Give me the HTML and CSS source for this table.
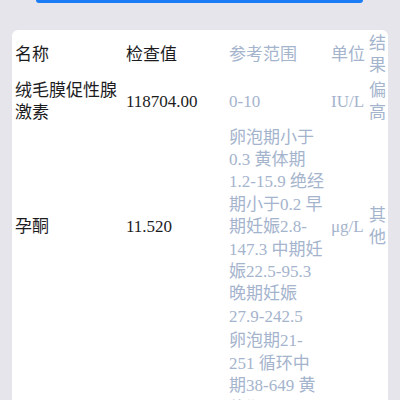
FILE: index.html
```html
<!DOCTYPE html>
<html lang="zh-CN">

<head>
    <meta charset="UTF-8">
    <title>检查报告</title>
    <link rel="stylesheet" href="styles.css">
</head>

<body>

    <div class="top-bar">
        <button class="primary-btn"></button>
    </div>

    <div class="report-card">
        <table class="report-table">
            <colgroup>
                <col class="col-name">
                <col class="col-value">
                <col class="col-range">
                <col class="col-unit">
                <col class="col-result">
            </colgroup>
            <thead>
                <tr>
                    <th>名称</th>
                    <th>检查值</th>
                    <th class="muted">参考范围</th>
                    <th class="muted">单位</th>
                    <th class="muted">结果</th>
                </tr>
            </thead>
            <tbody>
                <tr>
                    <td>绒毛膜促性腺激素</td>
                    <td>118704.00</td>
                    <td class="muted">0-10</td>
                    <td class="muted">IU/L</td>
                    <td class="muted">偏高</td>
                </tr>
                <tr>
                    <td>孕酮</td>
                    <td>11.520</td>
                    <td class="muted">卵泡期小于 0.3 黄体期 1.2-15.9 绝经期小于0.2 早期妊娠2.8-147.3 中期妊娠22.5-95.3 晚期妊娠27.9-242.5</td>
                    <td class="muted">μg/L</td>
                    <td class="muted">其他</td>
                </tr>
                <tr>
                    <td>雌二醇</td>
                    <td>1824.00</td>
                    <td class="muted">卵泡期21-251 循环中期38-649 黄体期21-312 绝经期小于10-28 早期妊娠215-4300 中期妊娠2675-18000 晚期妊娠5200-32000 男性小于47</td>
                    <td class="muted">pg/mL</td>
                    <td class="muted">其他</td>
                </tr>
            </tbody>
        </table>
    </div>

</body>

</html>
```

FILE: styles.css
```css
body {
    margin: 0;
    background: #e6e5eb;
    font-family: 'Liberation Serif', 'Noto Sans CJK SC', serif;
    font-size: 17px;
    color: #1c1c1e;
}

.top-bar {
    padding: 0 37px 0 36px;
}

.primary-btn {
    display: block;
    width: 100%;
    height: 3px;
    border: none;
    padding: 0;
    background: #1a7df6;
    border-radius: 0 0 4px 4px;
}

.report-card {
    margin: 27px 12px 0;
    padding-top: 1px;
    background: white;
    border-radius: 6px;
    overflow: hidden;
}

.report-table {
    width: 100%;
    table-layout: fixed;
    border-collapse: collapse;
    line-height: 22.4px;
}

.col-name {
    width: 111px;
}

.col-value {
    width: 103px;
}

.col-range {
    width: 102px;
}

.col-unit {
    width: 38px;
}

.col-result {
    width: 22px;
}

.report-table th,
.report-table td {
    padding: 2px 0 0 3px;
    text-align: left;
    font-weight: normal;
    vertical-align: middle;
}

.report-table th:nth-child(3),
.report-table td:nth-child(3) {
    padding-right: 2px;
}

.muted {
    color: #a5b4cd;
}
```
